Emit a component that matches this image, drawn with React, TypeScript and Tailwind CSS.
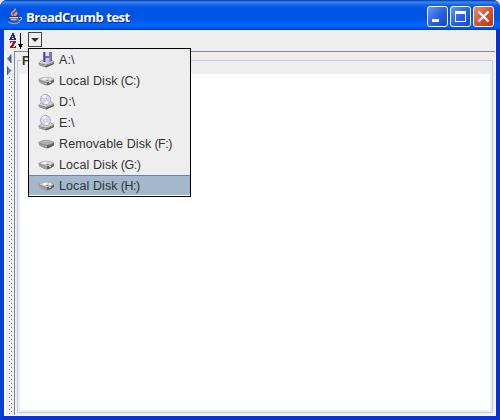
import React from 'react';

type Kind = 'floppy' | 'disk' | 'cd' | 'removable';

const drives: { label: string; suffix?: string; kind: Kind; selected?: boolean }[] = [
  { label: 'A:\\', kind: 'floppy' },
  { label: 'Local Disk', suffix: '(C:)', kind: 'disk' },
  { label: 'D:\\', kind: 'cd' },
  { label: 'E:\\', kind: 'cd' },
  { label: 'Removable Disk', suffix: '(F:)', kind: 'removable' },
  { label: 'Local Disk', suffix: '(G:)', kind: 'disk' },
  { label: 'Local Disk', suffix: '(H:)', kind: 'disk', selected: true },
];

function DriveIcon({ kind }: { kind: Kind }) {
  if (kind === 'disk' || kind === 'removable') {
    return (
      <svg width="17" height="16" viewBox="0 0 17 16" className="shrink-0">
        <path d="M0.5 6 Q5 3.8 8 3.8 Q13 4.4 16 6 V9 Q12 12.4 8.5 12.4 Q3 11 1 9Z" fill="#8a8a8a" />
        <path d="M1 6.2 Q5 4 8 4 Q13 4.6 15.5 6.2 Q12 9 9 9 Q4 8 1 6.2Z" fill={kind === 'disk' ? '#cfcfcf' : '#b0b0b0'} />
        <path d="M1 7.2 Q5 9.2 9 9.7 V12 Q4 11 1 9Z" fill="#a2a2a2" />
        <path d="M9 9.6 Q13 9 16 6.8 V9 Q12 12.2 9 12.2Z" fill="#606060" />
        {kind === 'disk' && (
          <>
            <path d="M4 6 L7 4.8 L9.5 5.8 L7 7Z" fill="#fff" />
            <path d="M11 5.6h2v1h-2z M11 8.7h2v1h-2z" fill="#f7f7f7" />
            <path d="M8.5 7h2v1h-2z" fill="#7b7b7b" />
          </>
        )}
      </svg>
    );
  }
  return (
    <svg width="17" height="16" viewBox="0 0 17 16" className="shrink-0">
      <path d="M0.5 11 L4 8 L13 7.5 L16 9.5 V12 L8 15.5 L1 13.2Z" fill="#808080" />
      <path d="M1 11 L4 8.5 L13 8 L15.5 9.7 L8 12.8Z" fill="#cfcfcf" />
      <path d="M1 11.8 L8 13.5 L15.5 10.5 V11.5 L8 14.6 L1 12.7Z" fill="#a9a9a9" />
      <path d="M8 14 L16 11 V12 L8 15.5Z" fill="#555" />
      {kind === 'cd' ? (
        <>
          <circle cx="7.5" cy="5.5" r="5" fill="#d9d7f2" stroke="#a3a2ba" strokeWidth="0.9" />
          <path d="M7.5 5.5 L4 2.3 A4.6 4.6 0 0 1 8 1Z M7.5 5.5 L11 9 A4.6 4.6 0 0 1 7 10Z" fill="#f8f8ff" />
          <circle cx="7.5" cy="5.5" r="1.4" fill="#fff" stroke="#9994be" strokeWidth="0.6" />
        </>
      ) : (
        <>
          <path d="M5 0h9v9l-2 1H5z" fill="#6b6bb8" />
          <path d="M7.5 0h3.5v4H7.5z" fill="#e2e2ee" />
          <path d="M7.5 6h4v4h-4z" fill="#c4c4d8" />
          <path d="M6 0h1v10H6z" fill="#4343a4" />
          <path d="M11.5 0h1v10h-1z" fill="#8c8cd8" />
        </>
      )}
    </svg>
  );
}

function JavaIcon() {
  return (
    <svg width="16" height="17" viewBox="0 0 16 17" className="shrink-0">
      <path d="M6 8 C3 5.5 5 4.5 7 3 Q8.5 2 8 0.5 M7.5 8 C6.5 6 8.5 5 10 4 M9 8 C8 6.5 10 6 10 5" fill="none" stroke="#f28d65" strokeWidth="1.6" />
      <path d="M1.5 8.5 H12 V11.5 Q11 14 7 14 Q2.5 14 1.5 8.5Z" fill="#7078b8" stroke="#27306f" strokeWidth="0.9" />
      <path d="M2.5 9h8.5v1H2.5z" fill="#d8daf4" />
      <path d="M4 11h5v1H4z" fill="#c1c5e8" />
      <path d="M12 9.5 h2.5 v2 L11.5 13" fill="none" stroke="#b1b7e0" strokeWidth="1.1" />
      <path d="M1 14 Q7 17 13 14" fill="none" stroke="#8f98d0" strokeWidth="1.3" />
    </svg>
  );
}

function SortIcon() {
  return (
    <svg width="16" height="17" viewBox="0 0 16 17" shapeRendering="crispEdges" className="shrink-0">
      <path d="M3 0h2v2h1v3h1v2H4V6h1V5H3v1h1v1H0V6h1V4h1V2h1z M3 3v1h1V3z" fill="#182c86" />
      <path d="M1 8h6v2H6v1H5v2H4v1h2v-1h1v2H1v-2h1v-1h1v-2h1V9H2v1H1z" fill="#a8141b" />
      <path d="M11 0h1v11h2v1h-1v2h-1v2h-1v-2h-1v-2H9v-1h2z" fill="#000" />
    </svg>
  );
}

function CaptionButton({ type }: { type: 'min' | 'max' | 'close' }) {
  return (
    <div
      className={
        'h-[21px] w-[21px] rounded-[3px] border border-white ' +
        (type === 'close'
          ? 'bg-linear-to-br from-[#ec8b70] via-[#dc512e] to-[#bd3510]'
          : 'bg-linear-to-br from-[#6b93f4] via-[#2864e4] to-[#1746c9]')
      }
    >
      <svg width="19" height="19" viewBox="0 0 19 19" shapeRendering={type === 'close' ? 'auto' : 'crispEdges'} className="block">
        {type === 'min' && <path d="M4 12h7v3H4z" fill="#fff" />}
        {type === 'max' && <path d="M4 4h11v11H4z M5 7v7h9V7z" fill="#fff" fillRule="evenodd" />}
        {type === 'close' && <path d="M4.5 4.5 L14.5 14.5 M14.5 4.5 L4.5 14.5" stroke="#fff" strokeWidth="2.3" />}
      </svg>
    </div>
  );
}

function TitleBar() {
  return (
    <header className="flex h-[30px] shrink-0 items-start rounded-t-[7px] bg-[linear-gradient(#0831a0_0,#3a8bf5_2px,#1262e8_5px,#0055e3_9px,#0055e5_18px,#0265fc_25px,#0059ef_28px,#0038b8_30px)] pl-[7px] pr-[6px] pt-[6px]">
      <div className="mt-[2px]"><JavaIcon /></div>
      <h1 className="ml-[3px] mt-[1px] grow whitespace-nowrap font-['Open_Sans',sans-serif] text-[13px] leading-[20px] font-bold tracking-[-0.48px] text-white [text-shadow:1px_1px_0_#0a2480]">
        BreadCrumb test
      </h1>
      <div className="flex gap-[2px]">
        <CaptionButton type="min" />
        <CaptionButton type="max" />
        <CaptionButton type="close" />
      </div>
    </header>
  );
}

function SplitDivider() {
  return (
    <div className="flex h-full w-[11px] shrink-0 flex-col border-l-2 border-r border-l-white border-r-[#7a8a99]">
      <svg width="8" height="25" viewBox="0 0 8 25" className="block shrink-0">
        <path d="M5 3.5V12L1 7.7Z" fill="#4d76b1" />
        <path d="M1.5 15.5V24L5.5 19.7Z" fill="#5a86bf" />
        <path d="M5 3.5V12 M1.5 15.5V24" stroke="#264878" strokeWidth="0.8" />
      </svg>
      <svg width="8" className="block min-h-0 grow" shapeRendering="crispEdges">
        <defs>
          <pattern id="grip" width="8" height="4" patternUnits="userSpaceOnUse">
            <path d="M3 1h1v1H3z M5 3h1v1H5z" fill="#767676" />
            <path d="M2 0h1v1H2z M4 2h1v1H4z" fill="#fff" />
          </pattern>
        </defs>
        <rect width="8" height="100%" fill="url(#grip)" />
      </svg>
    </div>
  );
}

function DriveMenu() {
  return (
    <ul className="absolute left-[28px] top-[48px] h-[149px] w-[163px] border border-black bg-[#eeeeee] font-['Liberation_Sans',Arial,sans-serif] text-[12.5px] text-[#333]">
      {drives.map((d, i) => (
        <li
          key={i}
          className={
            'flex h-[21px] items-center border-y pl-[9px] ' +
            (d.selected ? 'border-t-[#6382bf] border-b-white bg-[#a3b8cc]' : 'border-transparent')
          }
        >
          <DriveIcon kind={d.kind} />
          <span className="ml-[4px] whitespace-pre pt-[2px] leading-[19px] tracking-[0.1px]">{d.label}</span>
          {d.suffix && <span className="ml-[3px] pt-[2px] leading-[19px] tracking-[-0.45px]">{d.suffix}</span>}
        </li>
      ))}
    </ul>
  );
}

export default function App() {
  return (
    <div className="relative h-[420px] w-[500px] overflow-hidden bg-[#ece9d8]">
      <div className="flex h-full flex-col rounded-t-[7px] bg-[#003ddd]">
        <TitleBar />
        <div className="min-h-0 grow border-x-4 border-b-4 border-b-[#0831d9] border-l-[#0540dd] border-r-[#0731d5]">
          <main className="flex h-full flex-col border-r border-b border-white bg-[#eeeeee]">
            <div className="flex h-[21px] shrink-0 items-start pl-[5px] pt-[2px]">
              <div className="mt-[1px]"><SortIcon /></div>
              <button className="ml-[3px] flex h-[15px] w-[14px] items-center justify-center border border-[#444] bg-[#eee]">
                <svg width="8" height="4" viewBox="0 0 8 4"><path d="M0 0h8L4 4z" fill="#333" /></svg>
              </button>
            </div>
            <div className="flex min-h-0 grow">
              <SplitDivider />
              <section className="min-w-0 grow border-t border-[#7a8a99] pl-[2px] pr-[2px] pt-[8px] pb-[2px]">
                <fieldset className="relative h-full border border-[#b8cfe5] px-[2px] pt-[13px] pb-[2px]">
                  <span className="absolute left-[3px] top-[-7px] bg-[#eee] px-[1px] font-['Liberation_Sans',Arial,sans-serif] text-[12px] leading-[15px] font-bold text-[#333]">Files</span>
                  <div className="h-full bg-white" />
                </fieldset>
              </section>
            </div>
          </main>
        </div>
      </div>
      <DriveMenu />
    </div>
  );
}
